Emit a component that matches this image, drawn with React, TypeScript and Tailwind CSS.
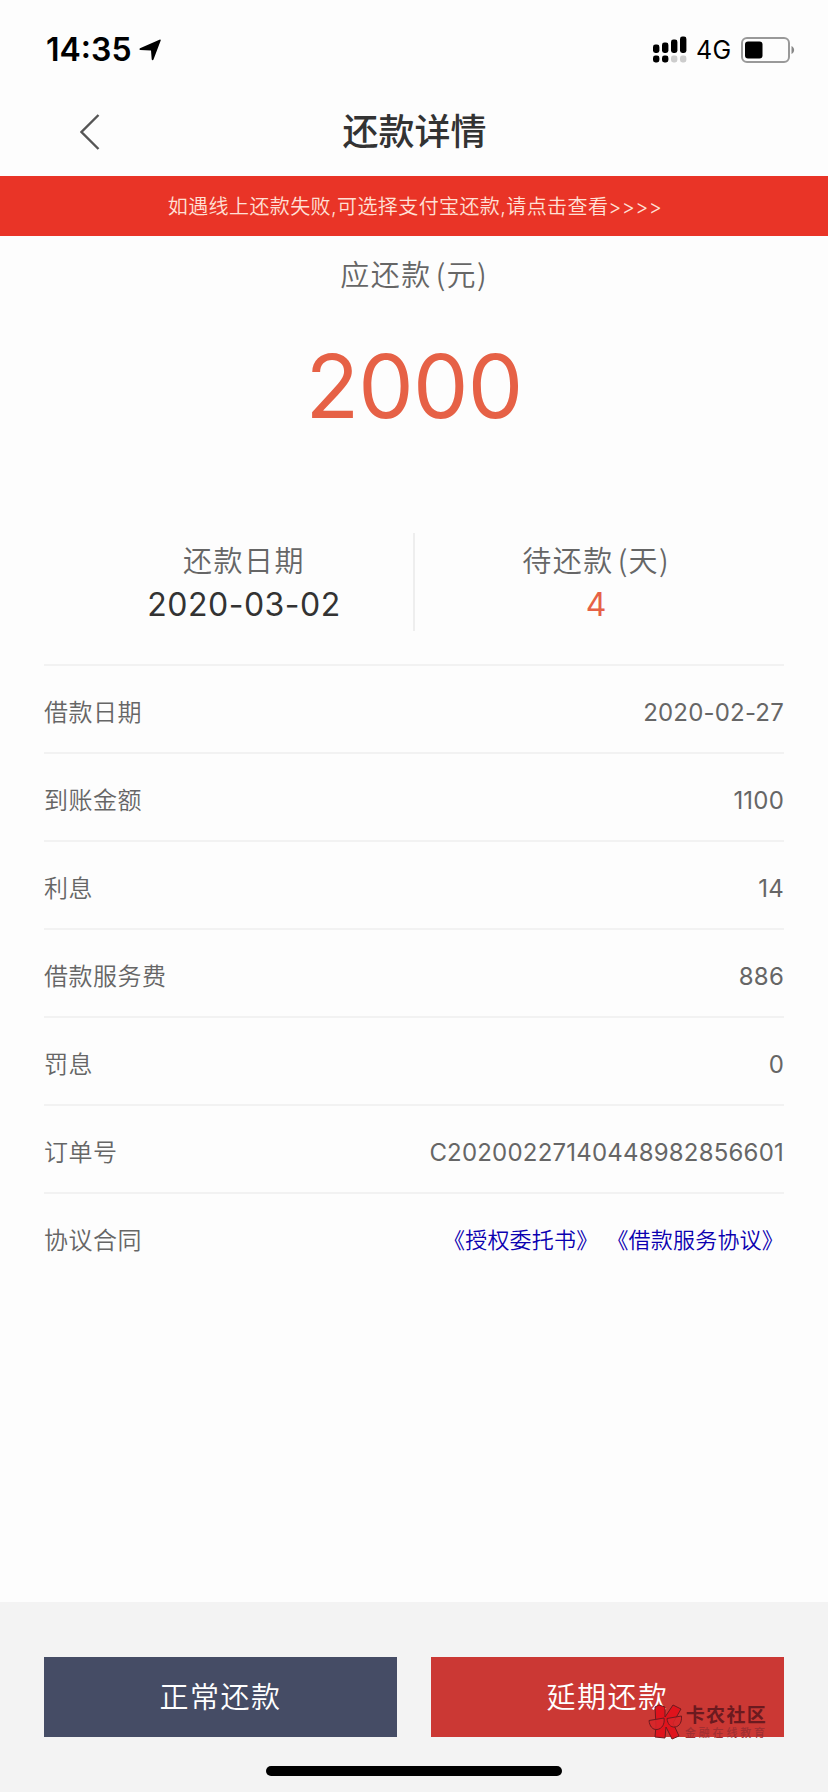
const rows = [
  { label: "借款日期", value: "2020-02-27" },
  { label: "到账金额", value: "1100" },
  { label: "利息", value: "14" },
  { label: "借款服务费", value: "886" },
  { label: "罚息", value: "0" },
  { label: "订单号", value: "C20200227140448982856601" },
];

function StatusBar() {
  return (
    <div className="flex h-[88px] items-center justify-between pl-[46px] pr-[33px] pt-3 text-black">
      <div className="flex items-center">
        <span className="w-[93px] text-[32px] font-semibold leading-none">14:35</span>
        <svg width="22" height="22" viewBox="0 0 22 22">
          <path d="M1 9.2 21 .6a.6.6 0 0 1 .7.8L14.5 20.5c-.5 1-1.7.8-1.8-.3L12 11.5 1.3 11c-1-.1-1.1-1.4-.3-1.8Z" />
        </svg>
      </div>
      <div className="flex items-center">
        <svg width="34" height="28" viewBox="0 0 34 28">
          <rect x="0" y="8.5" width="6.4" height="8.5" rx="2.4" />
          <rect x="9" y="6.5" width="6.4" height="10.5" rx="2.4" />
          <rect x="18" y="3.5" width="6.4" height="13.5" rx="2.4" />
          <rect x="27" y="0.5" width="6.4" height="16.5" rx="2.4" />
          <rect x="0" y="19.5" width="6.4" height="7" rx="2.4" />
          <rect x="9" y="19.5" width="6.4" height="7" rx="2.4" />
          <rect x="18" y="19.5" width="6.4" height="7" rx="2.4" fill="#ccc" />
          <rect x="27" y="19.5" width="6.4" height="7" rx="2.4" fill="#ccc" />
        </svg>
        <span className="ml-[9px] w-[45px] text-[25px] leading-none tracking-[0.4px]">4G</span>
        <svg width="54" height="26" viewBox="0 0 54 26">
          <rect x="1" y="1" width="47" height="24" rx="5" fill="none" stroke="#999" strokeWidth="2" />
          <rect x="4" y="4.5" width="17.5" height="17" rx="3" />
          <path d="M50.5 9c3.5 1.5 3.5 6.5 0 8Z" fill="#888" />
        </svg>
      </div>
    </div>
  );
}

function Header() {
  return (
    <header className="grid h-[88px] grid-cols-[1fr_auto_1fr] items-center">
      <svg className="ml-20" width="20" height="36" viewBox="0 0 20 36" fill="none" stroke="#555" strokeWidth="2.4">
        <path d="M18.5 1 1.5 18l17 17" />
      </svg>
      <h1 className="pl-px text-4xl font-medium leading-none text-[#333]">还款详情</h1>
    </header>
  );
}

function Label({ text, unit }: { text: string; unit?: string }) {
  return (
    <p className="font-['Noto_Sans_CJK_SC',sans-serif] text-[29px] font-[350] leading-10 tracking-[1.5px]">
      {text}
      {unit && <span className="ml-1 tracking-[1.3px]">({unit})</span>}
    </p>
  );
}

function Watermark() {
  return (
    <div className="absolute left-[217px] top-[47px] flex items-center">
      <svg width="34" height="36" viewBox="0 0 34 36" stroke="#6d1a1f" strokeWidth="1" strokeLinejoin="round">
        <path d="m7 3 4-2 6 2v10L25 1l8 4-8 14 6 13-7 3-6-12-1 11-10-1 1-11Z" fill="#e0131c" />
        <path d="M1 16.5 16 14c1 6-2 11-7 11.5C4.5 26 1.5 22 1 16.5Z" fill="#d8262a" fillOpacity="0.85" />
        <path d="M19 14.5 33.5 12c.5 6-2 10.5-6.500 11s-7.500-3-8-8.500Z" fill="#d8262a" fillOpacity="0.85" />
      </svg>
      <div className="ml-[3px] flex flex-col whitespace-nowrap font-bold leading-none text-[#6b1a1f]">
        <span className="text-[19px] leading-5 tracking-[1.3px]">卡农社区</span>
        <span className="mt-0.5 text-[11px] font-medium tracking-[2.8px] text-[#a02f32]">金融在线教育</span>
      </div>
    </div>
  );
}

export default function App() {
  return (
    <div className="flex h-[1792px] w-[828px] flex-col bg-[#fdfdfd] font-['Inter','Noto_Sans_CJK_SC',sans-serif] text-[#666]">
      <StatusBar />
      <Header />

      <div className="flex h-[60px] items-center justify-center bg-[#e93427] pl-0.5 pt-0.5 text-[20px] font-[350] tracking-[0.4px] text-[#ffe0d6]">
        如遇线上还款失败,可选择支付宝还款,请点击查看&gt;&gt;&gt;&gt;
      </div>

      <section className="flex flex-col items-center pt-[17px]">
        <Label text="应还款" unit="元" />
        <p className="mt-[47px] text-[88px] leading-[92px] tracking-[-0.8px] text-[#e66146]">2000</p>
      </section>

      <section className="mx-11 mt-[101px] grid h-[131px] grid-cols-[371px_1fr]">
        <div className="flex h-[98px] flex-col items-center border-r-2 border-[#eee] pl-[31px] pt-1.5">
          <Label text="还款日期" />
          <p className="mt-1.5 text-[32px] leading-10 tracking-[0.5px] text-[#333]">2020-03-02</p>
        </div>
        <div className="flex h-[98px] flex-col items-center pr-[7px] pt-1.5">
          <Label text="待还款" unit="天" />
          <p className="mt-1.5 text-[32px] leading-10 text-[#e66146]">4</p>
        </div>
      </section>

      <dl className="mx-11">
        {rows.map((row) => (
          <div key={row.label} className="flex h-[88px] items-center justify-between border-t-2 border-[#f2f2f2] pt-[7px] text-2xl">
            <dt className="font-[350] tracking-[0.5px]">{row.label}</dt>
            <dd className="tracking-[0.2px]">{row.value}</dd>
          </div>
        ))}
        <div className="flex h-[88px] items-center justify-between border-t-2 border-[#f2f2f2] pt-[7px] text-2xl">
          <dt className="font-[350] tracking-[0.5px]">协议合同</dt>
          <dd className="flex gap-2 text-[22px] font-[350] tracking-[0.2px] text-[#0b00b0]">
            <a>《授权委托书》</a>
            <a>《借款服务协议》</a>
          </dd>
        </div>
      </dl>

      <footer className="mt-auto flex h-[190px] flex-col items-center bg-[#f3f3f3] px-11 pt-[55px]">
        <div className="flex w-full gap-[34px] text-[29px] font-[350] tracking-[1.5px] text-white">
          <button className="h-20 flex-1 bg-[#454c65] pt-0.5">正常还款</button>
          <button className="relative h-20 flex-1 bg-[#cb3834] pt-0.5">
            延期还款
            <Watermark />
          </button>
        </div>
        <div className="mt-[29px] h-2.5 w-[296px] rounded-full bg-black" />
      </footer>
    </div>
  );
}
